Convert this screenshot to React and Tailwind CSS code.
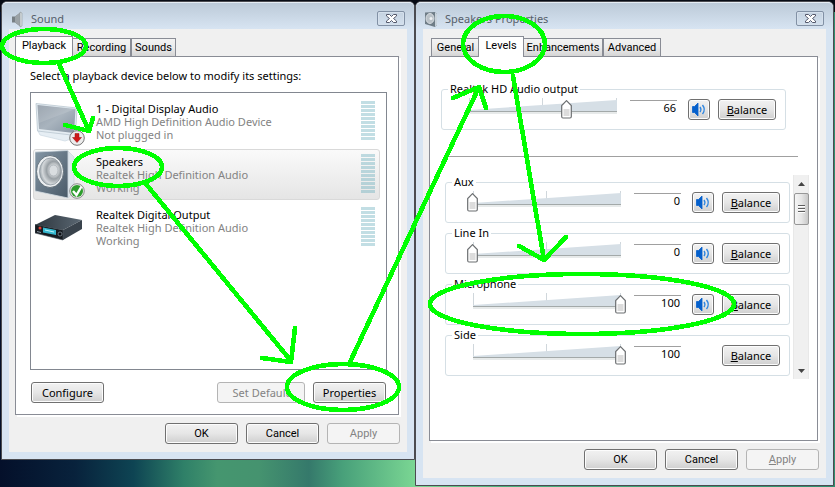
import { useState } from "react";
import clsx from "clsx";

const devices = [
  { name: "1 - Digital Display Audio", driver: "AMD High Definition Audio Device", status: "Not plugged in", icon: MonitorIcon },
  { name: "Speakers", driver: "Realtek High Definition Audio", status: "Working", icon: SpeakerIcon },
  { name: "Realtek Digital Output", driver: "Realtek High Definition Audio", status: "Working", icon: ReceiverIcon },
];

const channels = [
  { name: "Aux", value: 0, mute: true },
  { name: "Line In", value: 0, mute: true },
  { name: "Microphone", value: 100, mute: true },
  { name: "Side", value: 100, mute: false },
];

function MonitorIcon() {
  return (
    <svg className="h-[49px] w-[52px]" viewBox="0 0 52 49">
      <defs>
        <linearGradient id="screen" x1="0" y1="0" x2="1" y2="1">
          <stop offset="0" stopColor="#8f9aa6" />
          <stop offset="0.5" stopColor="#a9b4be" />
          <stop offset="1" stopColor="#8593a2" />
        </linearGradient>
      </defs>
      <path d="M3 34L8 33L36 37L42 40L30 44L5 38Z" fill="#e6eef4" stroke="#cbd8e2" strokeWidth="0.7" />
      <path d="M1 6.500L42 11L40.500 38.500L2.500 34Z" fill="#e4ecf2" stroke="#b3c1cc" strokeWidth="0.7" />
      <path d="M2.500 8L40.500 12L39 36L4 32Z" fill="url(#screen)" />
      <path d="M2.500 8L40.500 12L4 26Z" fill="#fff" opacity="0.12" />
      <circle cx="42" cy="41" r="7.300" fill="#ececec" stroke="#777" />
      <path d="M40 36.500h4v4h2.500l-4.500 5l-4.500-5H40z" fill="#d01818" stroke="#8e1010" strokeWidth="0.5" />
    </svg>
  );
}

function SpeakerIcon() {
  return (
    <svg className="h-[49px] w-[52px]" viewBox="0 0 52 49">
      <defs>
        <linearGradient id="cabinet" x1="0" y1="0" x2="1" y2="1">
          <stop offset="0" stopColor="#8496a5" />
          <stop offset="1" stopColor="#4a5a68" />
        </linearGradient>
        <radialGradient id="cone" cx="0.65" cy="0.45" r="0.65">
          <stop offset="0" stopColor="#fafafa" />
          <stop offset="0.25" stopColor="#dfe2e4" />
          <stop offset="0.5" stopColor="#989fa4" />
          <stop offset="0.8" stopColor="#d3d7da" />
          <stop offset="1" stopColor="#9aa3a9" />
        </radialGradient>
      </defs>
      <path d="M33 1L39 7V41L33 48Z" fill="#dfe7ed" stroke="#bcc8d1" strokeWidth="0.5" />
      <path d="M0 2L33 0.500V48L0 41Z" fill="url(#cabinet)" stroke="#d3dce2" strokeWidth="0.800" />
      <ellipse cx="15" cy="21.500" rx="13.500" ry="16" fill="#eceff1" stroke="#56636d" strokeWidth="0.800" />
      <ellipse cx="15.500" cy="21.500" rx="11" ry="13.500" fill="url(#cone)" stroke="#8a949c" strokeWidth="0.700" />
      <ellipse cx="18.500" cy="20.500" rx="4.500" ry="5.500" fill="#d9dde0" stroke="#a4abb0" strokeWidth="0.700" />
      <circle cx="42" cy="41" r="7.300" fill="#e8ece8" stroke="#777" strokeWidth="0.800" />
      <circle cx="42" cy="41" r="6" fill="#2c9c2c" />
      <path d="M38 41l3.500 4L46.500 36.500" fill="none" stroke="#fff" strokeWidth="2.400" />
    </svg>
  );
}

function ReceiverIcon() {
  return (
    <svg className="h-[49px] w-[52px]" viewBox="0 0 52 49">
      <defs>
        <linearGradient id="lid" x1="0" y1="0" x2="1" y2="0">
          <stop offset="0" stopColor="#2d363e" />
          <stop offset="1" stopColor="#5b6873" />
        </linearGradient>
      </defs>
      <path d="M0 22L20 12L47 17L28 27Z" fill="url(#lid)" />
      <path d="M28 27L47 17V26L28 37Z" fill="#39434c" />
      <path d="M0 21.500L28 27V37L0 30Z" fill="#161b20" stroke="#4a5660" strokeWidth="0.600" />
      <path d="M8 24.500L21 27V32L8 29.500Z" fill="#35b7cf" />
      <path d="M10 27L19 29" stroke="#bdf4fa" strokeWidth="1" />
      <circle cx="5" cy="25" r="1.500" fill="#e23f33" />
      <circle cx="25" cy="31" r="2" fill="#0b0f13" stroke="#8b98a3" strokeWidth="0.700" />
      <path d="M2 28.500l4 1" stroke="#8b98a3" />
    </svg>
  );
}

function SoundLogo() {
  return (
    <svg className="h-[17px] w-[11px]" viewBox="0 0 11 17">
      <path d="M0 5.500H3L9 1V16L3 11.500H0Z" fill="#777f84" />
      <path d="M3 5.500L9 1V16L3 11.500Z" fill="#9ba2a6" />
      <path d="M8 1L10 2V15L8 16Z" fill="#dce1e4" stroke="#8f979b" strokeWidth="0.6" />
    </svg>
  );
}

function SpeakerLogo() {
  return (
    <svg className="-ml-px h-[17px] w-[12px]" viewBox="0 0 12 17">
      <path d="M0 1.500L10 1L12 3V14L10 16L0 13Z" fill="#6f7d87" />
      <path d="M10 1L12 3V14L10 16Z" fill="#c8d2da" />
      <ellipse cx="5" cy="7.500" rx="4" ry="5" fill="#b9c1c7" stroke="#e6eaed" strokeWidth="0.8" />
      <circle cx="6" cy="7.500" r="1.500" fill="#eef0f2" />
    </svg>
  );
}

function VolumeGlyph() {
  return (
    <svg className="h-[15px] w-[16px] shrink-0" viewBox="0 0 16 15">
      <path d="M1.500 4.500H3.500L7 1V14L3.500 10.500H1.500Z" fill="#0560cc" stroke="#0560cc" strokeWidth="0.800" />
      <path d="M9 5Q10.800 7.500 9 10M11.500 3Q15 7.500 11.500 12" fill="none" stroke="#2f86e0" strokeWidth="1.400" />
    </svg>
  );
}

function Button({ className, ...props }) {
  return (
    <button
      type="button"
      className={clsx(
        "flex h-[21px] shrink-0 items-center justify-center rounded-[3px] border leading-[14px] whitespace-nowrap",
        props.disabled
          ? "border-[#b4b4b4] bg-[#f4f4f4] text-[#838383]"
          : "border-[#707070] bg-linear-to-b from-[#f2f2f2] from-0% via-[#e6e6e6] via-50% to-[#cfcfcf] to-100% inset-shadow-[0_0_0_1px_#fcfcfc]",
        className
      )}
      {...props}
    />
  );
}

function Tab({ active, className, children }) {
  return (
    <button
      type="button"
      role="tab"
      aria-selected={active}
      className={clsx(
        "border border-[#898c95] font-['Roboto','Liberation_Sans',sans-serif] leading-[14px] whitespace-nowrap",
        active
          ? "z-10 h-[21px] border-b-0 bg-white pb-[2px]"
          : "h-[19px] bg-linear-to-b from-[#f3f3f3] via-[#ebebeb] to-[#d5d5d5]",
        className
      )}
    >
      {children}
    </button>
  );
}

function DialogWindow({ title, logo, tabs, className, children }) {
  return (
    <section
      className={clsx(
        "min-w-0 rounded-t-[6px] border border-[#4b4b50] bg-[#d7e4f2]",
        className
      )}
    >
      <header className="flex h-[27px] items-center gap-[8px] rounded-t-[5px] border-t border-[#e6edf4] bg-linear-to-b from-[#bccad8] to-[#d7e4f2] pt-[6px] pr-[9px] pl-[10px]">
        {logo}
        <h1 className="flex-1 leading-[16px] text-[#56606b]">{title}</h1>
        <button
          type="button"
          aria-label="Close"
          className="mt-[2px] flex h-[15px] w-[28px] items-center justify-center self-start rounded-[2px] border border-[#8291a5] inset-shadow-[0_0_0_1px_#d5e0ec]"
        >
          <svg className="h-[11px] w-[13px]" viewBox="0 0 13 11">
            <path d="M1.500 1.500h3l2 2l2-2h3v1.500l-3 2.500l3 2.500v1.500h-3l-2-2l-2 2h-3v-1.500l3-2.500l-3-2.500z" fill="#fff" stroke="#54586b" />
          </svg>
        </button>
      </header>
      <div className="mx-[7px] mb-[7px] bg-[#f0f0f0] pt-[7px] pr-[7px] pb-[8px] pl-[6px]">
        <div role="tablist" className="relative -mb-px flex items-end">
          {tabs}
        </div>
        {children}
        <footer className="mt-[8px] flex justify-end gap-[8px] font-['Roboto','Liberation_Sans',sans-serif]">
          <Button className="w-[73px]">OK</Button>
          <Button className="w-[73px]">Cancel</Button>
          <Button className="w-[73px]" disabled>
            {title === "Sound" ? "Apply" : <span><u>A</u>pply</span>}
          </Button>
        </footer>
      </div>
    </section>
  );
}

function Device({ device, selected, onSelect }) {
  const Icon = device.icon;
  return (
    <li>
      <button
        type="button"
        onClick={onSelect}
        className={clsx(
          "flex h-[51px] w-full rounded-[3px] border pr-[4px] pl-px text-left",
          selected ? "border-[#d9d9d9] bg-linear-to-b from-[#fafafa] to-[#e5e5e5]" : "border-transparent"
        )}
      >
        <Icon />
        <span className="flex-1 pt-[5px] pl-[9px] leading-[13px] text-[#838383]">
          <span className="block text-black">{device.name}</span>
          <span className="block">{device.driver}</span>
          <span className="block">{device.status}</span>
        </span>
        <span className="flex flex-col gap-px pt-[4px]">
          {Array.from({ length: 10 }, (_, i) => (
            <span key={i} className="h-[3px] w-[14px] bg-[#5fa8b8]/38" />
          ))}
        </span>
      </button>
    </li>
  );
}

function LevelGroup({ name, value: initial, mute }) {
  const [value, setValue] = useState(initial);
  return (
    <fieldset className="min-w-0 rounded-[3px] border border-[#d5dfe5] pr-[9px] pb-[9px] pl-[22px]">
      <legend className="-ml-[16px] px-[2px] leading-[14px]">{name}</legend>
      <div className="flex h-[24px] items-end">
        <div className="relative h-[24px] min-w-0 flex-1 px-[5px]">
          <svg className="h-[20px] w-full" viewBox="0 0 148 20" preserveAspectRatio="none">
            <path d="M0.500 2V15M73.500 2V15M147.500 2V15" stroke="#d0d7dc" />
            <path d="M0 14L148 4V15H0Z" fill="#d6dfe6" />
            <path d="M-1 15.500H149" stroke="#a3a9a9" />
            <path d="M0 17H148" stroke="#e7eaea" strokeWidth="2" />
          </svg>
          <div className="pointer-events-none absolute inset-x-[5px] top-[4px]">
            <svg className="h-[19px] w-[11px]" viewBox="0 0 11 19" style={{ marginLeft: `calc(${value}% - 6px)` }}>
              <path d="M5.500 0.700L10.300 5.500V16.500Q10.300 18 9 18H2Q0.700 18 0.700 16.500V5.500Z" fill="#fff" stroke="#6b6e70" strokeWidth="1.200" />
              <path d="M2.500 9H8.500V16H2.500Z" fill="#dcdcdc" />
            </svg>
          </div>
          <input
            type="range"
            aria-label={name}
            value={value}
            onChange={(e) => setValue(Number(e.target.value))}
            className="absolute inset-0 h-full w-full opacity-0"
          />
        </div>
        <output className="ml-[8px] h-[20px] w-[47px] border-t border-[#a0a0a0] pr-px text-right leading-[14px]">
          {value}
        </output>
        <div className="mr-[8px] ml-[11px] w-[22px]">
          {mute && (
            <Button className="w-[22px]" aria-label={`Mute ${name}`}>
              <VolumeGlyph />
            </Button>
          )}
        </div>
        <Button className="w-[58px]">
          <span><u>B</u>alance</span>
        </Button>
      </div>
    </fieldset>
  );
}

function ScrollBar() {
  return (
    <div className="flex w-[16px] flex-col items-center border-x border-[#e8e8e8] bg-[#f0f0f0]">
      <button type="button" aria-label="Scroll up" className="flex h-[18px] w-full items-center justify-center">
        <svg className="h-[4px] w-[7px]" viewBox="0 0 7 4"><path d="M0 4L3.500 0L7 4Z" fill="#444" /></svg>
      </button>
      <div className="flex h-[32px] w-[15px] flex-col items-center justify-center gap-px rounded-[2px] border border-[#979797] bg-linear-to-r from-[#f5f5f5] via-[#e6e6e6] to-[#c8c8c8]">
        <span className="h-[2px] w-[7px] border-b border-white bg-[#5e5e5e]" />
        <span className="h-[2px] w-[7px] border-b border-white bg-[#5e5e5e]" />
        <span className="h-[2px] w-[7px] border-b border-white bg-[#5e5e5e]" />
      </div>
      <button type="button" aria-label="Scroll down" className="mt-auto flex h-[17px] w-full items-center justify-center">
        <svg className="h-[4px] w-[7px]" viewBox="0 0 7 4"><path d="M0 0L3.500 4L7 0Z" fill="#444" /></svg>
      </button>
    </div>
  );
}

function SoundDialog() {
  const [selected, setSelected] = useState(1);
  return (
    <DialogWindow
      title="Sound"
      logo={<SoundLogo />}
      className="flex-[414_1_0%]"
      tabs={
        <>
          <Tab active className="w-[58px]">Playback</Tab>
          <Tab className="w-[58px] border-l-0">Recording</Tab>
          <Tab className="w-[45px]">Sounds</Tab>
        </>
      }
    >
      <div className="mr-px border border-[#898c95] bg-white pt-[12px] pr-[11px] pb-[11px] pl-[14px] shadow-[2px_2px_0_#fff]">
        <p className="leading-[14px]">Select a playback device below to modify its settings:</p>
        <ul className="mt-[9px] flex h-[278px] flex-col gap-[2px] border border-[#828790] pt-[3px] pr-[6px] pl-[2px]">
          {devices.map((device, i) => (
            <Device key={device.name} device={device} selected={i === selected} onSelect={() => setSelected(i)} />
          ))}
        </ul>
        <div className="mt-[12px] flex gap-[8px] px-px">
          <Button className="mr-auto w-[73px]">Configure</Button>
          <Button className="w-[88px]" disabled>Set Default</Button>
          <Button className="w-[73px]">Properties</Button>
        </div>
      </div>
    </DialogWindow>
  );
}

function SpeakersDialog() {
  return (
    <DialogWindow
      title="Speakers Properties"
      logo={<SpeakerLogo />}
      className="flex-[419_1_0%]"
      tabs={
        <>
          <Tab className="ml-[2px] w-[48px] border-r-0">General</Tab>
          <Tab active className="-ml-px w-[46px]">Levels</Tab>
          <Tab className="w-[79px] border-l-0">Enhancements</Tab>
          <Tab className="w-[58px]">Advanced</Tab>
        </>
      }
    >
      <div className="mr-px border border-[#898c95] bg-white pt-[25px] pb-[61px] pl-[11px] shadow-[2px_2px_0_#fff]">
        <div className="pr-[31px]">
          <LevelGroup name="Realtek HD Audio output" value={66} mute />
        </div>
        <hr className="mt-[26px] mr-[19px] ml-[5px] border-[#a0a0a0]" />
        <div className="mt-[18px] mr-[8px] ml-[4px] flex gap-[3px]">
          <div className="flex min-w-0 flex-1 flex-col gap-[3px] pb-[3px]">
            {channels.map((channel) => (
              <LevelGroup key={channel.name} {...channel} />
            ))}
          </div>
          <ScrollBar />
        </div>
      </div>
    </DialogWindow>
  );
}

// hand-drawn circles and arrows that lead through the steps
function Annotations() {
  return (
    <svg
      className="pointer-events-none absolute top-0 left-0 z-20 w-full"
      viewBox="0 0 835 487"
      fill="none"
      stroke="#00ff00"
      strokeWidth="4.6"
      strokeLinecap="round"
      strokeLinejoin="round"
      shapeRendering="crispEdges"
    >
      <ellipse cx="44" cy="46" rx="42" ry="17" />
      <path d="M59 64L89 131M65 125L89 131L93 118" />
      <ellipse cx="118" cy="167" rx="44" ry="19" />
      <path d="M146 184L291 361M262 358L291 362L295 328" />
      <ellipse cx="343" cy="387" rx="56" ry="23" />
      <path d="M350 362L479 87M453 98L479 87L486 108" />
      <ellipse cx="504" cy="44" rx="41" ry="28" />
      <path d="M513 76L544 260M519 246L544 260L566 237" />
      <ellipse cx="582" cy="304" rx="152" ry="30" />
    </svg>
  );
}

export default function App() {
  return (
    <main className="relative min-h-screen bg-[#0b1020] bg-[linear-gradient(90deg,#04102a_0%,#08223c_9%,#0e4453_16%,#2f8068_22%,#45966f_26%,#45936f_31%,#35796b_37%,#48a07a_41%,#7cd894_50%,#4cb07e_60%,#2f8f70_100%)] font-['Noto_Sans','Open_Sans',sans-serif] text-[11px] text-black">
      <div className="absolute inset-x-0 top-0 h-[12px] bg-[#070b14]" />
      <div className="relative flex items-start pt-px pr-px pl-px">
        <SoundDialog />
        <SpeakersDialog />
      </div>
      <Annotations />
    </main>
  );
}
